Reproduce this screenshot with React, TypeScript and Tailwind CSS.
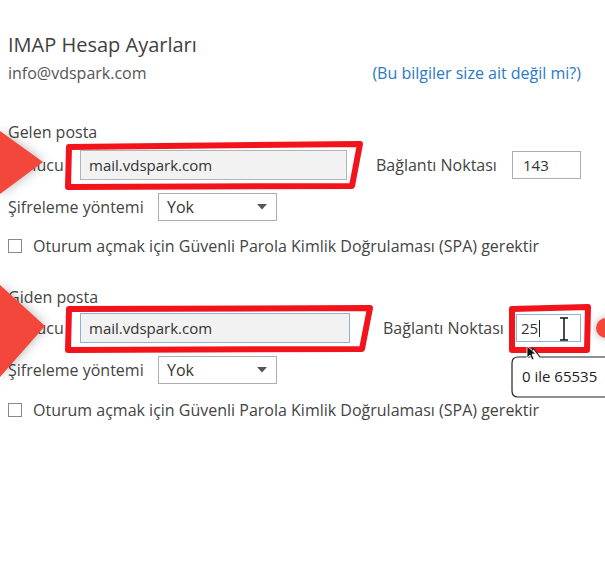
import React from "react";

const RED = "#f2141a";

function Caret() {
  return (
    <svg width="10" height="6" viewBox="0 0 10 6" className="shrink-0">
      <path d="M0 0 H10 L5 5.5 Z" fill="#555" />
    </svg>
  );
}

function SelectBox() {
  return (
    <div className="flex h-[28px] w-[119px] items-center justify-between border border-[#adadad] bg-white pl-[8px] pr-[9px] text-[16px] text-[#333]">
      <span>Yok</span>
      <Caret />
    </div>
  );
}

function CheckRow() {
  return (
    <div className="flex h-[20px] items-center">
      <span className="h-[14px] w-[14px] shrink-0 border border-[#8a8a8a] bg-white" />
      <span className="ml-[11px] text-[16px] text-[#444]">
        Oturum açmak için Güvenli Parola Kimlik Doğrulaması (SPA) gerektir
      </span>
    </div>
  );
}

function SelectRow() {
  return (
    <div className="flex items-center">
      <span className="w-[150px] text-[16px] text-[#444]">Şifreleme yöntemi</span>
      <SelectBox />
    </div>
  );
}

export default function App() {
  return (
    <div className="relative h-[572px] w-[605px] overflow-hidden bg-white pl-2 pt-[31px] font-['Open_Sans','Noto_Sans',sans-serif] text-[#444]">
      {/* left arrows pointing at the server fields */}
      <svg
        className="pointer-events-none absolute left-0 top-0 z-10 drop-shadow-[0_0_6px_rgba(0,0,0,0.3)]"
        width="60"
        height="400"
      >
        <polygon points="0,131 43,162 0,194" fill="#f4473b" />
        <polygon points="0,285 45,326 0,377" fill="#f4473b" />
      </svg>

      <h1 className="text-[20px] leading-[28px] text-[#3f3f3f]">IMAP Hesap Ayarları</h1>
      <div className="mt-[4px] flex items-center justify-between pr-[24px] leading-[20px]">
        <span className="text-[16px] text-[#555]">info@vdspark.com</span>
        <span className="text-[16px] text-[#2b79c9]">(Bu bilgiler size ait değil mi?)</span>
      </div>

      {/* Gelen posta */}
      <p className="mt-[39px] text-[16px] leading-[20px]">Gelen posta</p>
      <div className="mt-[8px] flex items-center">
        <span className="w-[72px] text-[16px]">Sunucu</span>
        <div className="relative flex h-[30px] w-[267px] items-center border border-[#b4b4b4] bg-[#f2f2f2] px-[8px] text-[15px] text-[#333]">
          mail.vdspark.com
          <svg className="absolute -left-[17px] -top-[10px]" width="300" height="50">
            <path
              d="M5 6 L296 3 L288 45 L4 46 Z"
              fill="none"
              stroke={RED}
              strokeWidth="6"
              strokeLinejoin="round"
            />
          </svg>
        </div>
        <span className="ml-[29px] w-[136px] text-[16px]">Bağlantı Noktası</span>
        <div className="flex h-[28px] w-[69px] items-center border border-[#adadad] bg-white px-[10px] text-[15px] text-[#333]">
          143
        </div>
      </div>
      <div className="mt-[13px]">
        <SelectRow />
      </div>
      <div className="mt-[15px]">
        <CheckRow />
      </div>

      {/* Giden posta */}
      <p className="mt-[31px] text-[16px] leading-[20px]">Giden posta</p>
      <div className="mt-[6px] flex items-center">
        <span className="w-[72px] text-[16px]">Sunucu</span>
        <div className="relative flex h-[30px] w-[270px] items-center border border-[#8fb1d6] bg-[#f2f2f2] px-[8px] text-[15px] text-[#333]">
          mail.vdspark.com
          <svg className="absolute -left-[17px] -top-[10px]" width="310" height="50">
            <path
              d="M5 5 L306 4 L298 45 L4 46 Z"
              fill="none"
              stroke={RED}
              strokeWidth="6"
              strokeLinejoin="round"
            />
          </svg>
        </div>
        <span className="ml-[33px] w-[133px] text-[16px]">Bağlantı Noktası</span>
        <div className="relative flex h-[28px] w-[65px] items-center border border-[#8fb1d6] bg-white pl-[4px] text-[15px] text-[#333]">
          25
          <span className="ml-[1px] h-[17px] w-[1px] bg-[#222]" />
          {/* I-beam cursor */}
          <svg className="absolute left-[42px] top-[2px]" width="10" height="24">
            <path d="M1 1 H9 M5 1 V23 M1 23 H9" stroke="#111" strokeWidth="1.5" fill="none" />
          </svg>
          <svg className="absolute -left-[9px] -top-[11px]" width="84" height="50">
            <path
              d="M4 5 L80 3 L79 46 L4 46 Z"
              fill="none"
              stroke={RED}
              strokeWidth="6"
              strokeLinejoin="round"
            />
          </svg>
          {/* tooltip */}
          <div className="absolute -left-[6px] top-[31px] z-20 h-[52px] w-[110px]">
            <svg className="absolute left-0 top-0" width="110" height="52">
              <path
                d="M110 11 H29 L22 2 L20 11 H7 Q1 11 1 17 V45 Q1 51 7 51 H110"
                fill="white"
                stroke="#222"
                strokeWidth="1.2"
              />
              <path d="M16 0 L16 12 L19 9 L21 14 L23 13 L21 8 L25 8 Z" fill="#111" stroke="white" strokeWidth="0.8" />
            </svg>
            <span className="absolute left-[11px] top-[20px] text-[15px] leading-[20px] text-[#222]">0 ile 65535</span>
          </div>
        </div>
      </div>
      <div className="mt-[13px]">
        <SelectRow />
      </div>
      <div className="mt-[16px]">
        <CheckRow />
      </div>

      {/* arrow tip coming from the right edge */}
      <div className="absolute left-[596px] top-[318px] h-[20px] w-[24px] rounded-full bg-[#f4473b] drop-shadow-[0_0_4px_rgba(0,0,0,0.3)]" />
    </div>
  );
}
